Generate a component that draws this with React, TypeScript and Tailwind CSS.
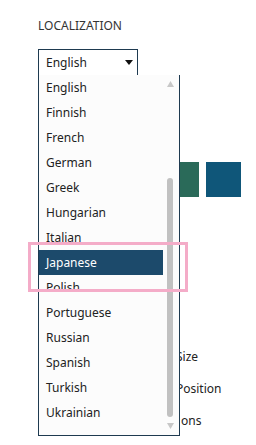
import React from "react";

const langs = [
  "English",
  "Finnish",
  "French",
  "German",
  "Greek",
  "Hungarian",
  "Italian",
  "Japanese",
  "Polish",
  "Portuguese",
  "Russian",
  "Spanish",
  "Turkish",
  "Ukrainian",
];

export default function App() {
  return (
    <div
      className="relative w-[256px] h-[445px] overflow-hidden bg-white text-[12px] text-[#222]"
      style={{ fontFamily: '"Noto Sans", "Open Sans", sans-serif' }}
    >
      <div className="pl-[38px] pt-[18px]">
        <div className="text-[12px] leading-[16px] text-[#333] tracking-[0px]">LOCALIZATION</div>
        <div className="mt-[15px] w-[100px] h-[26px] border-t border-l border-r border-[#1e3a50] flex items-center justify-between pl-[7px] pr-[4px]">
          <span className="leading-[16px]">English</span>
          <svg width="8" height="5" viewBox="0 0 8 5">
            <polygon points="0,0 8,0 4,5" fill="#111" />
          </svg>
        </div>
        <div className="mt-[87px] flex gap-[7px] ml-[126px]">
          <div className="w-[35px] h-[35px] bg-[#2a6a59]" />
          <div className="w-[35px] h-[35px] bg-[#0f5679]" />
        </div>
        <div className="mt-[152px] ml-[138px] flex flex-col gap-[16px] leading-[16px]">
          <span>Size</span>
          <span>Position</span>
          <span className="ml-[5px]">ons</span>
        </div>
      </div>

      <div className="absolute left-[38px] top-[75px] w-[142px] h-[361px] bg-[#fcfcfc] border-l border-r border-b border-[#1e3a50]">
        <div className="flex">
          <ul className="w-[124px]">
            {langs.map((l) => (
              <li
                key={l}
                className={
                  "h-[25px] flex items-center pl-[7px] leading-[16px] " +
                  (l === "Japanese" ? "bg-[#1c4a6b] text-white" : "text-[#222]")
                }
              >
                {l}
              </li>
            ))}
          </ul>
          <div className="ml-[4px] w-[7px] h-[360px] relative">
            <svg className="absolute left-0 top-[6px]" width="7" height="6" viewBox="0 0 7 6">
              <polygon points="3.5,0 7,6 0,6" fill="#c8c8c8" />
            </svg>
            <div className="absolute left-0 top-[103px] w-[6px] h-[239px] rounded-full bg-[#c1c1c1]" />
            <svg className="absolute left-0 top-[348px]" width="7" height="6" viewBox="0 0 7 6">
              <polygon points="0,0 7,0 3.5,6" fill="#c8c8c8" />
            </svg>
          </div>
        </div>
      </div>

      <div className="absolute left-[28px] top-[242px] w-[160px] h-[50px] border-[3px] border-[#f4acc8]" />
    </div>
  );
}
